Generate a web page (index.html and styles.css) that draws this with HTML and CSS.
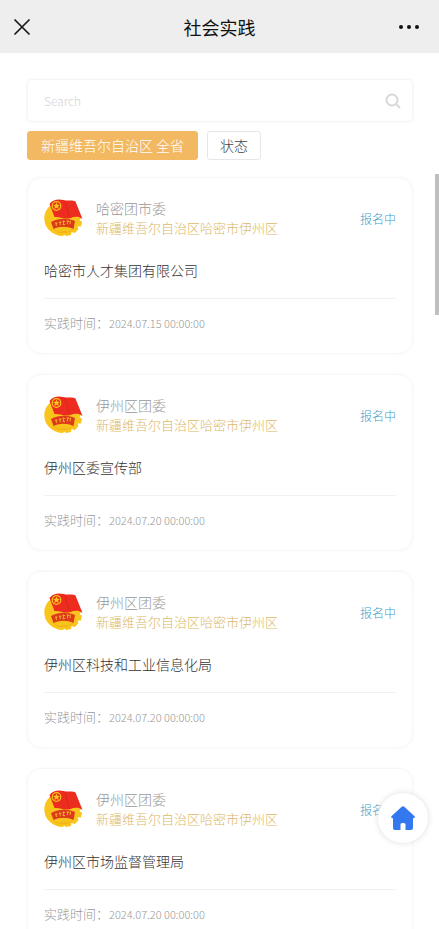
FILE: index.html
```html
<!DOCTYPE html>
<html lang="zh-CN">
<head>
<meta charset="utf-8">
<meta name="viewport" content="width=device-width, initial-scale=1">
<title>社会实践</title>
<link rel="stylesheet" href="styles.css">
</head>
<body>

<!-- shared badge, used by every card -->
<svg class="defs" aria-hidden="true">
  <symbol id="badge" viewBox="0 0 40 40">
    <path fill="#f9c51c" d="M7 7C-1 13-2 25 5 32c4 4 9 6 14 6l1-1.500 2 1.500 5-1 .5-3 3.500 1 3.500-4-1-2.500h3.500l1-5-2.500-1 2-4-4-4z"/>
    <path fill="none" stroke="#f2b21a" d="M9 31c6 5 14 5 20 0M15 35l4-2 4 1"/>
    <path fill="#ec2c1f" d="M5.500 6c4-5 9-5 14-4 5 1.500 8-.5 12 1.500l7 17.500c-4-3-8-2.500-12-1-6 2-10-1.500-16-1z"/>
    <path fill="none" stroke="#dc2419" d="M21 4l4 14"/>
    <circle cx="12.500" cy="8" r="4.300" fill="none" stroke="#f9c51c" stroke-width="1.200"/>
    <path fill="#f9c51c" d="M12.500 4.500l1 2.300 2.500.2-1.900 1.600.6 2.500-2.200-1.400-2.200 1.400.6-2.500L9 7l2.500-.2z"/>
    <path fill="#dc3a1a" d="M7 24c8-4 16-4 24-1l-1.500 8c-6.500-3-13.500-3-20 0z"/>
    <path fill="none" stroke="#f4a52b" d="M11 26l2.500-1m-1.500-1l.5 4m2.500-3.500l2.500-.2m-1.500-1l.2 4m2.300-3.800h2.500m-1.500-1v4m-1 0h2.500m1.500-3.500l2.500.4m-1.200-1l-.5 4m2.200-3l1.500.4m-1 2.400l.5-3.500"/>
  </symbol>
</svg>

<header class="topbar">
  <button type="button" class="icon-btn" aria-label="关闭">
    <svg width="18" height="18" viewBox="0 0 18 18"><path d="M1.500 1.500l15 15M16.500 1.500l-15 15" fill="none" stroke="#1a1a1a" stroke-width="1.700"/></svg>
  </button>
  <h1>社会实践</h1>
  <button type="button" class="icon-btn more" aria-label="更多">
    <svg width="20" height="6" viewBox="0 0 20 6"><g fill="#111"><circle cx="2" cy="3" r="2"/><circle cx="10" cy="3" r="2"/><circle cx="18" cy="3" r="2"/></g></svg>
  </button>
</header>

<main class="page">
  <form class="search">
    <input type="search" placeholder="Search" aria-label="Search">
    <button type="submit" class="icon-btn" aria-label="搜索">
      <svg width="16" height="16" viewBox="0 0 16 16"><g fill="none" stroke="#d8d8d8" stroke-width="2"><circle cx="7" cy="7" r="5.500"/><path d="M11 11l4 4"/></g></svg>
    </button>
  </form>

  <div class="filters">
    <button type="button" class="filter active">新疆维吾尔自治区 全省</button>
    <button type="button" class="filter">状态</button>
  </div>

  <section class="list">
    <article class="card">
      <div class="card-head">
        <svg class="avatar"><use href="#badge"/></svg>
        <div class="org">
          <p class="name">哈密团市委</p>
          <p class="region">新疆维吾尔自治区哈密市伊州区</p>
        </div>
        <span class="status">报名中</span>
      </div>
      <h2>哈密市人才集团有限公司</h2>
      <p class="time">实践时间：<time>2024.07.15 00:00:00</time></p>
    </article>

    <article class="card">
      <div class="card-head">
        <svg class="avatar"><use href="#badge"/></svg>
        <div class="org">
          <p class="name">伊州区团委</p>
          <p class="region">新疆维吾尔自治区哈密市伊州区</p>
        </div>
        <span class="status">报名中</span>
      </div>
      <h2>伊州区委宣传部</h2>
      <p class="time">实践时间：<time>2024.07.20 00:00:00</time></p>
    </article>

    <article class="card">
      <div class="card-head">
        <svg class="avatar"><use href="#badge"/></svg>
        <div class="org">
          <p class="name">伊州区团委</p>
          <p class="region">新疆维吾尔自治区哈密市伊州区</p>
        </div>
        <span class="status">报名中</span>
      </div>
      <h2>伊州区科技和工业信息化局</h2>
      <p class="time">实践时间：<time>2024.07.20 00:00:00</time></p>
    </article>

    <article class="card">
      <div class="card-head">
        <svg class="avatar"><use href="#badge"/></svg>
        <div class="org">
          <p class="name">伊州区团委</p>
          <p class="region">新疆维吾尔自治区哈密市伊州区</p>
        </div>
        <span class="status">报名中</span>
      </div>
      <h2>伊州区市场监督管理局</h2>
      <p class="time">实践时间：<time>2024.07.20 00:00:00</time></p>
    </article>
  </section>
</main>

<div class="scroll-thumb"></div>

<a href="#" class="home" aria-label="首页">
  <svg width="24" height="24" viewBox="0 0 24 24"><path fill="#3478f0" d="M10.700.8a2 2 0 0 1 2.600 0l10 9.200c.9.900.5 2.300-.7 2.300H22V22a2 2 0 0 1-2 2h-5.500v-5.500A1.500 1.500 0 0 0 13 17h-2a1.500 1.500 0 0 0-1.500 1.500V24H4a2 2 0 0 1-2-2v-9.700h-.6C.2 12.300-.2 10.900.7 10z"/></svg>
</a>

</body>
</html>
```
FILE: styles.css
```css
* {box-sizing: border-box}

html, body {
  height: 100%;
}

body {
  margin: 0;
  display: flex;
  flex-direction: column;
  background: #fff;
  color: #444;
  font-family: "Noto Sans CJK SC", "Noto Sans", sans-serif;
  font-size: 14px;
  font-weight: 300;
}

h1, h2, p {
  margin: 0;
}

button, input {
  font: inherit;
}

.defs {
  position: absolute;
  width: 0;
  height: 0;
}

.topbar {
  display: grid;
  flex: none;
  grid-template-columns: 1fr auto 1fr;
  align-items: center;
  height: 53px;
  padding: 0 20px 0 13px;
  background: #eee;
}

.topbar h1 {
  padding-left: 7px;
  color: #111;
  font-size: 18px;
  font-weight: 400;
  line-height: 24px;
}

.icon-btn {
  display: flex;
  padding: 0;
  border: none;
  background: none;
  cursor: pointer;
}

.more {
  justify-self: end;
}

.page {
  flex: 1;
  min-height: 0;
  padding: 26px 26px 0 27px;
  overflow-y: auto;
  scrollbar-width: none;
}

.search {
  display: flex;
  align-items: center;
  height: 43px;
  padding: 0 11px 0 16px;
  border: 1px solid #f5f5f5;
  border-radius: 4px;
  box-shadow: 0 0 3px #f4f4f4;
}

.search input {
  flex: 1;
  min-width: 0;
  padding: 0;
  border: none;
  outline: none;
  background: none;
  font-size: 12px;
}

.search input::placeholder {
  color: #d5d5d5;
}

.filters {
  display: flex;
  gap: 9px;
  margin: 9px 0 17px;
}

.filter {
  height: 29px;
  padding: 0 12px 2px;
  border: 1px solid #e6e6e6;
  border-radius: 3px;
  background: #fff;
  color: #444;
  line-height: 20px;
  cursor: pointer;
}

.filter.active {
  padding: 0 13px 2px;
  border-color: #f3b962;
  background: #f3b962;
  color: #fff;
}

.list {
  display: flex;
  flex-direction: column;
  gap: 20px;
}

.card {
  padding: 20px 16px;
  border: 1px solid #f7f7f7;
  border-radius: 14px;
  box-shadow: 0 0 3px #f5f5f5;
}

.card-head {
  display: flex;
  align-items: center;
  height: 40px;
}

.avatar {
  flex: none;
  width: 40px;
  height: 40px;
  margin-right: 12px;
}

.org {
  flex: 1;
  line-height: 19px;
}

.name {
  color: #999;
}

.region {
  color: #dcb866;
  font-size: 13px;
}

.status {
  color: #3c9bca;
  font-size: 12px;
}

.card h2 {
  margin-top: 20px;
  padding-bottom: 16px;
  border-bottom: 1px solid #f1f1f1;
  color: #333;
  font-size: 14px;
  font-weight: 300;
  line-height: 24px;
}

.time {
  display: flex;
  align-items: center;
  padding-top: 14px;
  color: #999;
  font-size: 13px;
  line-height: 20px;
}

.time time {
  font-size: 11px;
}

/* floats over the page edge */
.scroll-thumb {
  position: fixed;
  top: 174px;
  right: 0;
  width: 4px;
  height: 141px;
  background: #bfbfbf;
}

.home {
  position: fixed;
  right: 11px;
  bottom: 86px;
  display: flex;
  align-items: center;
  justify-content: center;
  width: 50px;
  height: 50px;
  border-radius: 50%;
  background: #fff;
  box-shadow: 0 0 6px #ddd;
}
```
